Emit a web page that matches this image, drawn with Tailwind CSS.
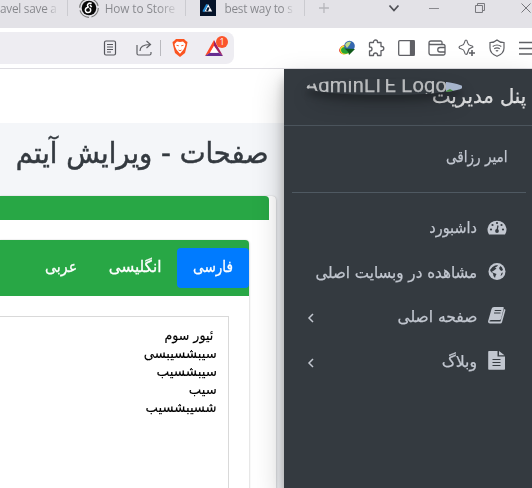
<!DOCTYPE html>
<html lang="fa">
<head>
<meta charset="utf-8">
<title>پنل مدیریت</title>
<script src="https://cdn.jsdelivr.net/npm/@tailwindcss/browser@4"></script>
</head>
<body class="w-[532px] h-[488px] overflow-hidden bg-white flex flex-col font-['DejaVu_Sans',sans-serif]">
<header class="shrink-0">
  <div class="h-7 bg-[#e3e2e7] flex items-start overflow-hidden text-[11.8px] leading-4 text-[#85868b] font-['Open_Sans',sans-serif] whitespace-nowrap">
    <div class="w-[67px] h-4"><span class="block w-fit -tracking-[0.25px] bg-linear-to-r from-[#85868b] from-80% to-[#d5d4d9] bg-clip-text text-transparent">avel save a</span></div>
    <div class="w-px h-4 bg-[#cbcbd0]"></div>
    <svg class="ml-[11px] -mt-0.5 w-5 h-5 shrink-0" viewBox="0 0 20 20"><circle cx="10" cy="10" r="9.3" fill="none" stroke="#777" stroke-width="1.2" stroke-dasharray="12 2.6"/><circle cx="10" cy="10" r="7.3" fill="#090909"/><path d="M12.7 5.5c-4-1.5-5.500 2.500-3 3.700-4 0-4.500 4.800-1 5.300 3.500.3 3.800-3.500 1.800-4.500M11 7l1.700 2" fill="none" stroke="#fff" stroke-width="1.500"/></svg>
    <div class="ml-[6px] w-[72px]"><span class="block w-fit -tracking-[0.1px] bg-linear-to-r from-[#85868b] from-75% to-[#cccbd0] bg-clip-text text-transparent">How to Store</span></div>
    <div class="ml-[9px] w-px h-4 bg-[#cbcbd0]"></div>
    <svg class="ml-[14px] w-4 h-4 shrink-0" viewBox="0 0 16 16"><path fill="#051329" d="M0 0h16v16H0z"/><path d="M4 11.500 8 4l4.200 7.500z" fill="#fff"/><path d="m3.300 11.800 3.800-7.300" stroke="#238bd5" stroke-width="2"/><path d="m7 11 1.700-3.600" stroke="#051329" stroke-width="2"/></svg>
    <div class="ml-[8px] w-[71px]"><span class="block w-fit -tracking-[0.25px] bg-linear-to-r from-[#85868b] from-85% to-[#d5d4d9] bg-clip-text text-transparent">best way to s</span></div>
    <div class="ml-[9px] w-px h-4 bg-[#cbcbd0]"></div>
    <svg class="ml-[13px] w-3 h-4" viewBox="0 0 12 16" fill="none" stroke="#b7b7bc" stroke-width="1.300"><path d="M6 3v10M1 8h10"/></svg>
    <svg class="ml-[56px] w-4 h-4" viewBox="0 0 16 16" fill="none" stroke="#505157" stroke-width="1.800"><path d="m3.500 5.500 4.500 5 4.500-5"/></svg>
    <svg class="ml-[26px] w-3 h-4" viewBox="0 0 12 16" stroke="#88888d"><path d="M1 8.500h10"/></svg>
    <svg class="ml-[34px] w-3 h-4" viewBox="0 0 12 16" fill="none" stroke="#77777c"><path d="M1.500 5.500h7v7h-7zM3.500 5V3.500h7v7H9"/></svg>
    <svg class="ml-[34px] w-3 h-4 shrink-0" viewBox="0 0 12 16" fill="none" stroke="#77777c"><path d="m1.500 3.500 9 9m0-9-9 9"/></svg>
  </div>
  <div class="h-[41px] bg-white border-b border-[#dedde2] flex items-center overflow-hidden">
    <div class="w-[234px] h-8 bg-[#eeedf2] rounded-r-[8px] flex items-center shrink-0">
      <svg class="ml-[102px] w-4 h-4" viewBox="0 0 16 16" fill="none" stroke="#55565c" stroke-width="1.200"><rect x="2.500" y="1" width="11" height="14" rx="1.500"/><path d="M5 4.500h6M5 7h6M5 9.500h6M5 12h4"/></svg>
      <svg class="ml-[18px] w-4 h-4" viewBox="0 0 16 16" fill="none" stroke="#606166" stroke-width="1.200"><path d="M1 5v8.500Q1 15 2.500 15H13.500Q15 15 15 13.500V12M4 11c0-4 3-6.500 10-6.500M10.500 1 14.500 4.500 10.500 8"/></svg>
      <div class="ml-[8px] w-px h-4 bg-[#b9b9be]"></div>
      <svg class="ml-[11px] w-4 h-[18px]" viewBox="0 0 16 18"><path d="M4 0h8l2 2 1.500 1-.5 3-2 8-5 4-5-4-2-8-.5-3L2 2z" fill="#fb5420"/><path d="m8 3 3-.6L13.500 5l-.7 3-1.200 2.500L8 14.700l-3.600-4.200L3.200 8l-.7-3L5 2.400z" fill="#fff"/><path d="m4.500 6.300 2.300.5M11.500 6.300l-2.300.5M6.500 11l1.500.8 1.500-.8" fill="none" stroke="#fb5420" stroke-width=".9"/></svg>
      <div class="ml-[17px] relative w-[24px] h-6">
        <svg class="mt-1 w-[18px] h-4" viewBox="0 0 18 16"><path d="M9 0 0 16l5-3 4-7z" fill="#ff4724"/><path d="M0 16h18l-4-3.300H5z" fill="#662d91"/><path d="m9 0 9 16-4-3.300L9 6z" fill="#9e1f63"/><path d="m9 6 4 6.700H5z" fill="#fff"/></svg>
        <span class="absolute left-[11px] top-0 w-3 h-3 rounded-full bg-[#fb542b] text-white text-[9px] leading-3 text-center font-['Open_Sans',sans-serif]">1</span>
      </div>
    </div>
    <svg class="ml-[105px] w-4 h-4 shrink-0" viewBox="0 0 16 16"><ellipse cx="6" cy="9.500" rx="6" ry="4.500" transform="rotate(-20 6 9.500)" fill="#e43d22"/><path d="M1 10c0-5 5-5 8-4l2 6c-4 4-10 3-10-2z" fill="#f5dd2e"/><path d="M2 10c0-3 5-4 7-3l2 5c-4 3-9 2-9-2z" fill="#29a535"/><circle cx="10.500" cy="6" r="5.300" fill="#3568b0"/><path d="M6 5c1-3 4-4 6-3L10.500 5 8 8z" fill="#bdd987"/><path d="m5.500 8.500 10.500.5-6 6-.8-3z" fill="#105a1a"/></svg>
    <svg class="ml-[12px] w-[18px] h-[18px] shrink-0" viewBox="0 0 18 18" fill="none" stroke="#606166" stroke-width="1.300" stroke-linejoin="round"><path d="M3 3.500h3.500V3a2 2 0 0 1 4 0v.5H14v4h.7a2 2 0 0 1 0 4.200H14V16.500H10.500V16a2 2 0 0 0-4 0v.5H2.500V12h.5a2 2 0 0 0 0-4h-.5V4z"/></svg>
    <svg class="ml-[13px] w-[17px] h-4 shrink-0" viewBox="0 0 17 16" fill="none" stroke="#606166" stroke-width="1.300"><rect x=".7" y=".7" width="15.600" height="14.600" rx="1"/><path d="M12.500 1H16v14h-3.500z" fill="#606166"/></svg>
    <svg class="ml-[13px] w-[18px] h-4 shrink-0" viewBox="0 0 18 16" fill="none" stroke="#606166" stroke-width="1.300"><path d="M14 4V2.500Q14 1 12.500 1H3Q1 1 1 3v9.500Q1 15 3 15h12.500q1.500 0 1.500-1.500V6q0-1.500-1.500-1.500H3Q1 4.500 1 3M17 7.500h-5a2.200 2.200 0 0 0 0 4.500h5"/></svg>
    <svg class="ml-[12px] w-[18px] h-[18px] shrink-0" viewBox="0 0 18 18" fill="none" stroke="#606166" stroke-width="1.200"><path d="M8 1q1.200 0 1.500 2.500Q10 6 12.500 6.500 15 7 15 8l-4 2-1.500 4Q9 15.500 8 15.500T6.500 13Q6 10.500 3.500 10 1 9.500 1 8.300T3.500 6.500Q6 6 6.500 3.500 7 1 8 1z"/><path d="M14 11v6M11 14h6" stroke-width="1.600"/></svg>
    <svg class="ml-[13px] w-4 h-[18px] shrink-0" viewBox="0 0 16 18" fill="none" stroke="#606166" stroke-width="1.200"><path d="M8 1C6 3 4 3.500 1 3.500V9c0 4 3.500 7 7 8.300C11.500 16 15 13 15 9V3.500C12 3.500 10 3 8 1zM3.700 7.500q4.300-3 8.600 0M5.200 9.800q2.800-1.800 5.600 0M6.800 12q1.200-.8 2.400 0"/></svg>
    <svg class="ml-[14px] w-[18px] h-4 shrink-0" viewBox="0 0 18 16" stroke="#606166" stroke-width="1.300"><path d="M0 2.500h18M0 8.500h18M0 14h18"/></svg>
  </div>
</header>

<div class="flex flex-1 min-h-0">
  <main class="w-[284px] shrink-0 flex flex-col overflow-hidden">
    <div class="h-[54px] bg-white shrink-0"></div>
    <div class="flex-1 min-h-0 bg-[#f4f6f9] flex flex-col">
      <h1 dir="rtl" class="h-[73px] shrink-0 pr-[15px] pt-[6px] text-[29px] leading-[48px] text-[#343a40] whitespace-nowrap [-webkit-text-stroke:0.5px_#343a40]"><span class="inline-block origin-right scale-x-[0.945]">صفحات - ویرایش آیتم</span></h1>
      <section class="w-[276px] flex-1 bg-white rounded-tr-[4px] shadow-[0_0_1px_rgba(0,0,0,.2),0_1px_3px_rgba(0,0,0,.2)]">
        <div class="w-[269px] h-6 bg-[#28a745] rounded-tr-[4px]"></div>
        <div class="mt-5 w-[249px] h-[252px] rounded-tr-[4px] shadow-[0_0_1px_rgba(0,0,0,.25),0_1px_3px_rgba(0,0,0,.2)] bg-white">
          <nav dir="rtl" class="h-14 bg-[#28a745] rounded-tr-[4px] flex items-center text-[16px] text-white whitespace-nowrap [-webkit-text-stroke:0.3px_#fff]">
            <a class="w-[72px] h-10 rounded-[4px] bg-[#007bff] pr-4 leading-[38px]"><span class="inline-block origin-right scale-x-[0.85]">فارسی</span></a>
            <a class="w-[84px] h-10 pr-4 leading-[38px]"><span class="inline-block origin-right scale-x-[0.95]">انگلیسی</span></a>
            <a class="w-[64px] h-10 pr-4 leading-[38px]"><span class="inline-block origin-right scale-x-[0.89]">عربی</span></a>
          </nav>
          <div dir="rtl" class="mt-5 w-[229px] h-[180px] border-t border-r border-[#d9d9d9] pt-[9px] pr-[11px] text-[14px] leading-[18px] text-black whitespace-nowrap [-webkit-text-stroke:0.15px_#000]">
            <p class="pr-[4px]"><span class="inline-block origin-right scale-x-[0.9]">ئیور سوم</span></p>
            <p><span class="inline-block origin-right scale-x-[0.94]">سیبشسیبسی</span></p>
            <p><span class="inline-block origin-right scale-x-[0.96]">سیبشسیب</span></p>
            <p><span class="inline-block origin-right scale-x-[0.94]">سیب</span></p>
            <p><span class="inline-block origin-right scale-x-[0.94]">شسیبشسیب</span></p>
          </div>
        </div>
      </section>
    </div>
  </main>
  <aside dir="rtl" class="relative w-[248px] bg-[#343a40] text-[#c2c7d0] shadow-[0_14px_28px_rgba(0,0,0,.25),0_10px_10px_rgba(0,0,0,.22)] whitespace-nowrap [-webkit-text-stroke:0.25px_currentColor]">
    <div class="relative h-[57px] border-b border-[#4b545c] pr-[6px] text-[20px] leading-[54px] text-white/80">
      <span class="inline-block origin-right scale-x-[0.98]">پنل مدیریت</span>
      <div dir="ltr" class="absolute left-[22px] top-[10px] w-[157px] h-4 rounded-[50%] overflow-hidden opacity-80 flex font-['Roboto',sans-serif] text-[20px] leading-[13px] text-white/80"><span class="w-[141px] tracking-[0.25px] -ml-px">AdminLTE Logo</span><svg class="w-4 h-4" viewBox="0 0 16 16"><path fill="#c3d3f0" d="M0 3h16v10H0z"/><path fill="#4da33c" d="m0 12 4-2 7 4H0z"/></svg></div>
      <div class="absolute left-[22px] top-[10px] w-[157px] h-4 rounded-[50%] shadow-[0_10px_20px_rgba(0,0,0,.19),0_6px_6px_rgba(0,0,0,.23)]"></div>
    </div>
    <div class="mr-[6px] w-[234px] h-[67px] border-b border-[#4f5962] pr-[18px] text-[16px] leading-[62px]"><span class="inline-block origin-right scale-x-[0.85]">امیر رزاقی</span></div>
    <ul class="pt-[13px] pr-[25px] pl-[22px] text-[16px]">
      <li class="h-[44.500px] flex items-center"><svg class="w-5 h-5 ml-[10px] shrink-0" viewBox="0 0 20 20"><path d="M2 16.500A9.500 9 0 1 1 18 16.500Z" fill="#c2c7d0"/><g fill="#343a40"><circle cx="4" cy="11.500" r="1.100"/><circle cx="5.500" cy="7" r="1.100"/><circle cx="10" cy="5" r="1.100"/><circle cx="14.500" cy="7" r="1.100"/><circle cx="16" cy="11.500" r="1.100"/><circle cx="10" cy="13" r="1.900"/></g><path d="m10 12.500 1-5" stroke="#343a40" stroke-width="1.300"/></svg><span class="inline-block origin-right scale-x-[0.9]">داشبورد</span></li>
      <li class="h-[44.500px] flex items-center"><svg class="w-5 h-5 ml-[10px] shrink-0" viewBox="0 0 20 20"><circle cx="10" cy="8.500" r="8.500" fill="#c2c7d0"/><path d="m8 2.500 3-.5-1 1.500-2 1 1.500 1-2.500 2L4.500 9 7 10l2.500 1-1 2-.5 2-1.500-2-.5-2.500-2-1.500-1-2L5.500 4z" fill="#343a40"/><path d="m13.500 3 1.500 1.500 1 2.500-1.500 1-1.500-1-1-2zM14.500 10l1.500-.5-1 2.500-1.500 1z" fill="#343a40"/></svg><span class="inline-block shrink-0 origin-right scale-x-[0.945]">مشاهده در وبسایت اصلی</span></li>
      <li class="h-[44.500px] flex items-center"><svg class="w-5 h-5 ml-[10px] shrink-0" viewBox="0 0 20 20"><path d="M7 0h9q1 0 .7 1.200L14 12q-.4 1-1.500 1H4q-2 0-1.500 1.500h11L17 2l1.500.8-3.500 12.500q-.4 1.200-1.800 1.200H3q-2 0-2-2L4.500 2Q5 0 7 0z" fill="#c2c7d0"/><path d="M7.700 3.500h6.500M7 6h6.500" stroke="#343a40"/></svg><span class="inline-block origin-right scale-x-[0.97]">صفحه اصلی</span><svg class="mr-auto w-[10px] h-4 mt-0.5" viewBox="0 0 10 16" fill="none" stroke="#c2c7d0" stroke-width="1.500"><path d="m7 4-4 4 4 4"/></svg></li>
      <li class="h-[44.500px] flex items-center"><svg class="w-5 h-5 ml-[10px] shrink-0 overflow-visible" viewBox="0 1 20 20"><path d="M2 0h8.500v5.500H18V18q0 .8-.8.800H2q-.8 0-.8-.8V.8Q1.200 0 2 0zM12 0l5.500 4.300H12z" fill="#c2c7d0"/><path d="M5.500 8.500h8M5.500 11.500h8M5.500 14.500h8" stroke="#343a40" stroke-width="1.200"/></svg><span class="inline-block origin-right scale-x-[0.98]">وبلاگ</span><svg class="mr-auto w-[10px] h-4 mt-0.5" viewBox="0 0 10 16" fill="none" stroke="#c2c7d0" stroke-width="1.500"><path d="m7 4-4 4 4 4"/></svg></li>
    </ul>
  </aside>
</div>
</body>
</html>
